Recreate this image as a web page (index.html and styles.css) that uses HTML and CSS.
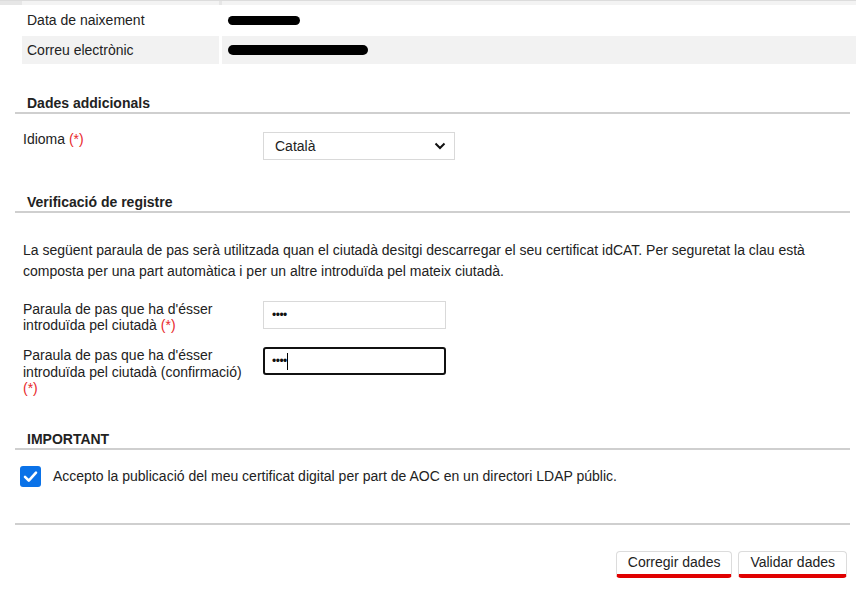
FILE: index.html
```html
<!DOCTYPE html>
<html lang="ca">
<head>
<meta charset="utf-8">
<link rel="stylesheet" href="styles.css">
</head>
<body>
<div class="page">
  <div class="datatable">
    <div class="row prev"><div class="c1"></div><div class="c2"></div></div>
    <div class="row"><div class="c1">Data de naixement</div><div class="c2"><span class="blob b1"></span></div></div>
    <div class="row alt"><div class="c1">Correu electrònic</div><div class="c2"><span class="blob b2"></span></div></div>
  </div>

  <h2 class="sec-title t1">Dades addicionals</h2>
  <div class="field f-idioma">
    <label class="lbl">Idioma <span class="req">(*)</span></label>
    <div class="select"><span>Català</span>
      <svg class="chev" width="12" height="8" viewBox="0 0 12 8"><path d="M1.5 1.5 L6 6 L10.5 1.5" fill="none" stroke="#111" stroke-width="2"/></svg>
    </div>
  </div>

  <h2 class="sec-title t2">Verificació de registre</h2>
  <p class="info">La següent paraula de pas serà utilitzada quan el ciutadà desitgi descarregar el seu certificat idCAT. Per seguretat la clau està composta per una part automàtica i per un altre introduïda pel mateix ciutadà.</p>

  <div class="field f-pw1">
    <label class="lbl lbl-wrap">Paraula de pas que ha d'ésser introduïda pel ciutadà <span class="req">(*)</span></label>
    <div class="input"><span class="dots">••••</span></div>
  </div>
  <div class="field f-pw2">
    <label class="lbl lbl-wrap">Paraula de pas que ha d'ésser introduïda pel ciutadà (confirmació) <span class="req">(*)</span></label>
    <div class="input focus"><span class="dots">••••</span><span class="caret"></span></div>
  </div>

  <h2 class="sec-title t3">IMPORTANT</h2>
  <div class="check-row">
    <span class="checkbox"><svg width="21" height="21" viewBox="0 0 21 21"><path d="M5 10.8 L8.8 14.6 L16 6.6" fill="none" stroke="#fff" stroke-width="2.6" stroke-linecap="round" stroke-linejoin="round"/></svg></span>
    <span class="check-text">Accepto la publicació del meu certificat digital per part de AOC en un directori LDAP públic.</span>
  </div>

  <div class="divider"></div>

  <div class="actions">
    <button class="btn">Corregir dades</button>
    <button class="btn">Validar dades</button>
  </div>
</div>
</body>
</html>
```

FILE: styles.css
```css
html, body {
  margin: 0;
  padding: 0;
  background: #fff;
}
body {
  font-family: "Liberation Sans", Arial, sans-serif;
  font-size: 14px;
  color: #222;
  width: 856px;
  overflow: hidden;
}
.page {
  padding: 0 6px 0 15px;
}
.datatable {
  margin-left: 7px;
  margin-right: -6px;
}
.row {
  display: flex;
  gap: 3px;
  height: 29px;
  margin-bottom: 1px;
}
.row.prev {
  margin-left: -22px;
  padding-left: 22px;
  background: #e6e6e6;
  border-top: 1px solid #dcdcdc;
  height: 4px;
}
.row.prev .c1, .row.prev .c2 { background: #f3f3f3; }
.row.alt {
  height: 28px;
}
.row.alt .c1, .row.alt .c2 { background: #f2f2f2; }
.c1 {
  width: 192px;
  padding-left: 5px;
  line-height: 28px;
  flex: none;
}
.c2 {
  flex: 1;
  padding-left: 6px;
  display: flex;
  align-items: center;
}
.blob {
  display: block;
  background: #000;
  border-radius: 5px;
}
.b1 { width: 72px; height: 9px; }
.b2 { width: 140px; height: 10px; }

.sec-title {
  margin: 0;
  font-size: 14px;
  font-weight: bold;
  padding: 0 0 1px 12px;
  line-height: 16px;
  border-bottom: 2px solid #cfcfcf;
}
.t1 { margin-top: 31px; }
.t2 { margin-top: 34px; }
.t3 { margin-top: 34px; }

.field {
  display: flex;
  align-items: flex-start;
  padding-left: 8px;
}
.lbl {
  width: 240px;
  flex: none;
  line-height: 16.5px;
}
.lbl-wrap { width: 226px; margin-right: 14px; }
.f-pw1 .lbl { line-height: 16px; padding-bottom: 1px; }
.req { color: #e8282b; }
.f-idioma { margin-top: 17px; }
.select {
  width: 190px;
  height: 26px;
  border: 1px solid #d9d9d9;
  display: flex;
  align-items: center;
  justify-content: space-between;
  margin-top: 1px;
}
.select span { padding-left: 11px; }
.chev { margin-right: 8px; }

.info {
  margin: 27px 0 0 8px;
  line-height: 21px;
  padding-right: 40px;
}
.f-pw1 { margin-top: 19px; }
.f-pw2 { margin-top: 13px; }
.input {
  width: 181px;
  height: 26px;
  border: 1px solid #d9d9d9;
  display: flex;
  align-items: center;
}
.input.focus {
  border: 2px solid #111;
  border-radius: 3px;
  width: 179px;
  height: 24px;
}
.dots {
  font-size: 12px;
  letter-spacing: -0.5px;
  padding-left: 8px;
  color: #111;
}
.input.focus .dots { padding-left: 7px; }
.caret {
  display: inline-block;
  width: 1px;
  height: 17px;
  background: #000;
}

.check-row {
  display: flex;
  align-items: center;
  margin-top: 16px;
  padding-left: 5px;
}
.checkbox {
  width: 21px;
  height: 21px;
  background: #0a72e8;
  border-radius: 3px;
  display: block;
  flex: none;
}
.checkbox svg { display: block; }
.check-text { margin-left: 12px; }

.divider {
  margin-top: 36px;
  border-top: 2px solid #cfcfcf;
}
.actions {
  display: flex;
  justify-content: flex-end;
  gap: 6px;
  margin-top: 26px;
  margin-right: 3px;
}
.btn {
  font-family: "Liberation Sans", Arial, sans-serif;
  font-size: 14px;
  color: #222;
  background: #fff;
  border: 1px solid #dcdcdc;
  border-bottom: 4px solid #e00000;
  border-radius: 4px;
  height: 27px;
  padding: 0 11px 1px;
  line-height: 20px;
}
```
